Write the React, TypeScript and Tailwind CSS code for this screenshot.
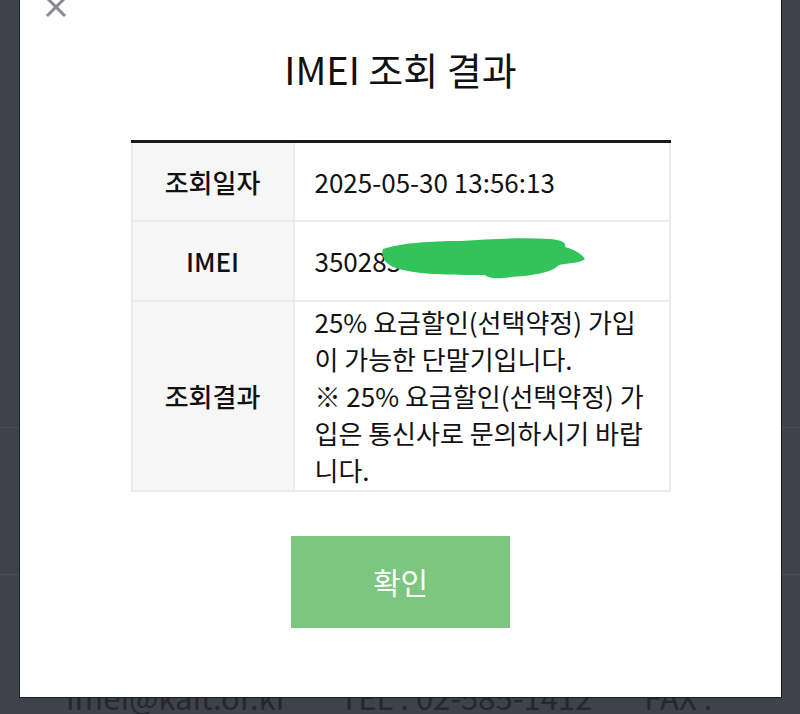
import React from 'react';

const font = { fontFamily: '"Noto Sans CJK KR", "Noto Sans", sans-serif' };

function CloseIcon() {
  return (
    <svg width="22" height="22" viewBox="0 0 22 22" className="block">
      <path d="M3 3 L19 19 M19 3 L3 19" stroke="#8a8a8e" strokeWidth="3" strokeLinecap="square" />
    </svg>
  );
}

// green marker scribble that hides the rest of the IMEI number
function Scribble() {
  return (
    <svg className="absolute left-[66px] -top-[6px]" width="210" height="48" viewBox="0 0 210 48">
      <path
        d="M2 14 C20 8 50 6 80 6 C110 4 140 2 170 4 C180 5 186 8 184 12 C192 14 200 18 204 24 C200 28 188 28 178 30 C172 36 160 40 130 42 C118 44 108 44 104 40 C90 40 60 40 40 38 C26 36 12 34 6 28 C2 24 0 18 2 14 Z"
        fill="#33c35b"
      />
    </svg>
  );
}

export default function App() {
  return (
    <div className="relative w-[800px] h-[714px] overflow-hidden bg-[#3f414b]" style={font}>
      {/* page behind the dialog */}
      <div className="flex flex-col">
        <div className="h-[428px] border-b border-[#4b4d57]" />
        <div className="h-[147px] border-b border-[#4b4d57]" />
        <div className="pt-[106px] flex gap-[52px] pl-[66px] text-[31px] text-[#25272d] leading-none">
          <span>imei@kait.or.kr</span>
          <span>TEL : 02-585-1412</span>
          <span>FAX :</span>
        </div>
      </div>

      {/* dialog */}
      <div className="absolute left-[19px] top-0 w-[763px] h-[698px] bg-white border-x border-b border-[#1c1d22] flex flex-col items-center">
        <button className="absolute left-[25px] -top-[4px]">
          <CloseIcon />
        </button>

        <h2 className="mt-[42px] text-[38px] leading-[54px] text-[#111] font-normal">IMEI 조회 결과</h2>

        <table className="mt-[44px] w-[540px] border-collapse border-t-[3px] border-t-[#1a1a1a] text-[26px] text-[#111]">
          <tbody>
            <tr className="h-[79px]">
              <th className="w-[162px] bg-[#f6f6f6] border-2 border-[#ebebeb] border-t-0 font-medium">조회일자</th>
              <td className="border-2 border-[#ebebeb] border-t-0 pl-[20px] font-normal">2025-05-30 13:56:13</td>
            </tr>
            <tr className="h-[80px]">
              <th className="bg-[#f6f6f6] border-2 border-[#ebebeb] font-medium">IMEI</th>
              <td className="border-2 border-[#ebebeb] pl-[20px] font-normal">
                <span className="relative inline-block">
                  350283
                  <Scribble />
                </span>
              </td>
            </tr>
            <tr className="h-[190px]">
              <th className="bg-[#f6f6f6] border-2 border-[#ebebeb] font-medium">조회결과</th>
              <td className="border-2 border-[#ebebeb] pl-[20px] pr-[10px] font-normal leading-[37px]">
                25% 요금할인(선택약정) 가입
                <br />이 가능한 단말기입니다.
                <br />※ 25% 요금할인(선택약정) 가
                <br />입은 통신사로 문의하시기 바랍
                <br />니다.
              </td>
            </tr>
          </tbody>
        </table>

        <button className="mt-[44px] w-[219px] h-[92px] bg-[#7dc67f] text-white text-[30px]">확인</button>
      </div>
    </div>
  );
}
